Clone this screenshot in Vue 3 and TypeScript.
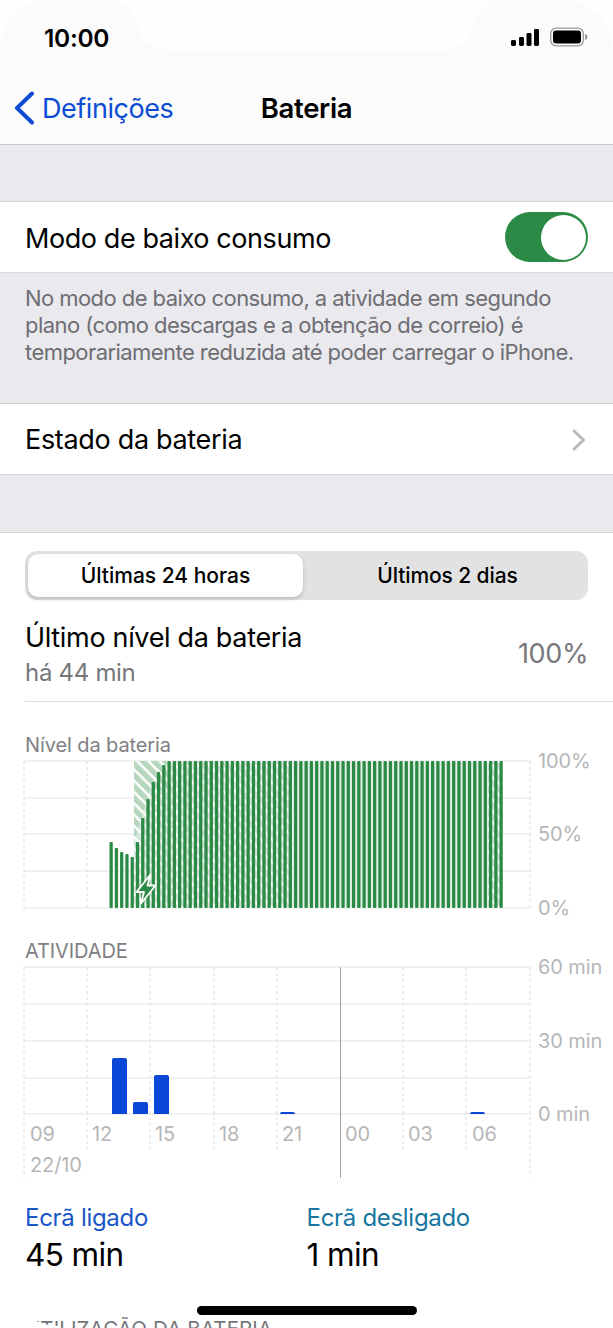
<script setup lang="ts">
const tops = [842, 848, 852, 854, 857, 842, 818, 799, 782, 772, 765]
const pitch = 5.27
const bars = Array.from({ length: 75 }, (_, i) => {
  const top = i < tops.length ? tops[i] : 761
  return { x: 109.5 + i * pitch, top, h: 908 - top }
})
const batteryDashes = [24, 87, 530]
const activityDashes = [87, 150, 214, 277, 403, 466]
const rows = [967, 1004, 1041, 1078, 1114]
const batteryRows = [761, 798, 834, 871, 908]
const hours = [
  ['09', 30], ['12', 92], ['15', 155], ['18', 219], ['21', 282], ['00', 345], ['03', 408], ['06', 472],
] as const
const activity = [
  { x: 112, top: 1058 }, { x: 133, top: 1102 }, { x: 154, top: 1075 }, { x: 280, top: 1112 }, { x: 470, top: 1112 },
]
</script>

<template>
  <div class="screen">
    <header class="top">
      <svg class="notch" width="613" height="52" viewBox="0 0 613 52" aria-hidden="true">
        <path d="M0 52 C2 18 20 0 52 0 L112 0 C126 0 132 14 138 28 C144 44 156 50 172 50 L440 50 C456 50 466 44 472 28 C477 14 484 0 498 0 L560 0 C592 0 611 18 613 52 L613 0 L0 0Z" fill="#fefefe" />
      </svg>
      <div class="status">
        <span class="time">10:00</span>
        <span class="indicators">
          <svg width="30" height="18" viewBox="0 0 30 18" aria-hidden="true">
            <rect x="1" y="12" width="5" height="6" rx="1.4" />
            <rect x="9" y="9" width="5" height="9" rx="1.4" />
            <rect x="16.500" y="5" width="5" height="13" rx="1.4" />
            <rect x="24" y="1" width="5" height="17" rx="1.4" />
          </svg>
          <svg width="38" height="20" viewBox="0 0 38 20" aria-hidden="true">
            <rect x="0.700" y="1.200" width="32.600" height="17.600" rx="5.500" fill="none" stroke="#9a9a9a" stroke-width="1.300" />
            <rect x="3" y="3.500" width="28" height="13" rx="3.200" fill="#000" />
            <path d="M35 7 C36.800 7.600 37.500 8.600 37.500 10 C37.500 11.400 36.800 12.400 35 13Z" fill="#9a9a9a" />
          </svg>
        </span>
      </div>
      <nav class="nav">
        <a class="back">
          <svg width="22" height="36" viewBox="0 0 22 36" aria-hidden="true">
            <path d="M20 3.500 L5 18 L20 32.500" fill="none" stroke="#0d4cd3" stroke-width="4" stroke-linecap="round" stroke-linejoin="round" />
          </svg>
          <span>Definições</span>
        </a>
        <h1>Bateria</h1>
      </nav>
    </header>

    <div class="gap first"></div>

    <section class="row low">
      <span>Modo de baixo consumo</span>
      <span class="toggle"><i></i></span>
    </section>

    <p class="note">No modo de baixo consumo, a atividade em segundo plano (como descargas e a obtenção de correio) é temporariamente reduzida até poder carregar o iPhone.</p>

    <section class="row state">
      <span>Estado da bateria</span>
      <svg width="16" height="24" viewBox="0 0 16 24" aria-hidden="true">
        <path d="M3 3 L12.500 12 L3 21" fill="none" stroke="#b8b8bd" stroke-width="3" stroke-linecap="round" stroke-linejoin="round" />
      </svg>
    </section>

    <div class="gap second"></div>

    <main class="panel">
      <div class="segment">
        <span class="seg active">Últimas 24 horas</span>
        <span class="seg">Últimos 2 dias</span>
      </div>

      <div class="last">
        <div class="last-text">
          <div class="last-title">Último nível da bateria</div>
          <div class="last-sub">há 44 min</div>
        </div>
        <div class="last-value">100%</div>
      </div>

      <div class="chart-title level">Nível da bateria</div>
      <svg class="chart battery" width="613" height="180" viewBox="0 746 613 180" aria-label="Nível da bateria">
        <defs>
          <pattern id="hatch" width="8" height="8" patternUnits="userSpaceOnUse" patternTransform="rotate(-45)">
            <rect width="8" height="8" fill="#ffffff" />
            <rect width="5.500" height="8" fill="#b7d6be" />
          </pattern>
        </defs>
        <line v-for="y in batteryRows" :key="y" x1="24" x2="530" :y1="y" :y2="y" class="grid" />
        <line v-for="x in batteryDashes" :key="x" :x1="x" :x2="x" y1="761" y2="908" class="dash" />
        <path d="M134 761 H167 V790 L150 790 L134 842Z" fill="url(#hatch)" />
        <rect x="134" y="761" width="156" height="147" fill="url(#hatch)" opacity="0.6" />
        <rect x="290" y="761" width="198" height="147" fill="#e6f1e8" />
        <rect x="488" y="761" width="14" height="147" fill="url(#hatch)" opacity="0.7" />
        <rect v-for="(b, i) in bars" :key="i" :x="b.x" :y="b.top" width="3.300" :height="b.h" rx="1" fill="#2b8a45" />
        <path d="M150.500 874.500 L136.500 892 L144 892 L141 903.500 L155.500 885.500 L147.500 885.500Z" fill="#2b8a45" stroke="#ffffff" stroke-width="1.800" stroke-linejoin="round" />
        <text x="538" y="768" class="axis">100%</text>
        <text x="538" y="841" class="axis">50%</text>
        <text x="538" y="915" class="axis">0%</text>
      </svg>

      <div class="chart-title activity">ATIVIDADE</div>
      <svg class="chart act" width="613" height="230" viewBox="0 956 613 230" aria-label="Atividade">
        <line v-for="y in rows" :key="y" x1="24" x2="530" :y1="y" :y2="y" class="grid" />
        <line x1="24" x2="24" y1="967" y2="1178" class="dash" />
        <line v-for="x in activityDashes" :key="x" :x1="x" :x2="x" y1="967" y2="1151" class="dash" />
        <line x1="530" x2="530" y1="967" y2="1178" class="dash" />
        <line x1="340.500" x2="340.500" y1="967" y2="1178" stroke="#a4a4a4" stroke-width="1" />
        <path v-for="a in activity" :key="a.x" :d="`M${a.x} 1114 V${a.top + 2} Q${a.x} ${a.top} ${a.x + 2} ${a.top} H${a.x + 13} Q${a.x + 15} ${a.top} ${a.x + 15} ${a.top + 2} V1114Z`" fill="#0a47d6" />
        <text v-for="h in hours" :key="h[0]" :x="h[1]" y="1141" class="axis">{{ h[0] }}</text>
        <text x="30" y="1172" class="axis">22/10</text>
        <text x="538" y="974" class="axis">60 min</text>
        <text x="538" y="1048" class="axis">30 min</text>
        <text x="538" y="1121" class="axis">0 min</text>
      </svg>

      <div class="stats">
        <div class="stat">
          <div class="stat-label on">Ecrã ligado</div>
          <div class="stat-value">45 min</div>
        </div>
        <div class="stat">
          <div class="stat-label off">Ecrã desligado</div>
          <div class="stat-value">1 min</div>
        </div>
      </div>

      <div class="usage">UTILIZAÇÃO DA BATERIA</div>
    </main>

    <svg class="corners" width="613" height="62" viewBox="0 0 613 62" aria-hidden="true">
      <path d="M0 0 A60 60 0 0 0 60 60 L60 62 L0 62Z M613 0 A60 60 0 0 1 553 60 L553 62 L613 62Z" fill="#fff" />
    </svg>
    <div class="home"></div>
  </div>
</template>

<style>
html, body { margin: 0; background: #fff; }
</style>

<style scoped>
.screen {
  position: relative;
  width: 613px;
  height: 1328px;
  overflow: hidden;
  background: #fff;
  color: #000;
  font-family: Inter, "Liberation Sans", sans-serif;
}
.top {
  position: relative;
  height: 145px;
  box-sizing: border-box;
  background: #fbfbfc;
  border-bottom: 1px solid #c9c9cc;
}
.notch { position: absolute; left: 0; top: 0; }
.status {
  position: relative;
  display: flex;
  justify-content: space-between;
  align-items: center;
  height: 50px;
  padding: 25px 25px 0 44px;
  box-sizing: border-box;
}
.time { font-size: 24.500px; font-weight: 600; letter-spacing: -0.3px; }
.indicators { display: flex; align-items: center; gap: 10px; margin-top: -2px; }
.nav {
  display: grid;
  grid-template-columns: 1fr auto 1fr;
  align-items: center;
  height: 36px;
  margin-top: 40px;
}
.back {
  display: flex;
  align-items: center;
  gap: 8px;
  margin-left: 12px;
  color: #0d4cd3;
  font-size: 27px;
  letter-spacing: -0.45px;
}
.nav h1 { margin: 0; font-size: 27.500px; font-weight: 600; letter-spacing: -0.35px; }
.gap { background: #e9e9ee; }
.gap.first { height: 56px; }
.gap.second { height: 57px; }
.row {
  display: flex;
  align-items: center;
  justify-content: space-between;
  box-sizing: border-box;
  height: 72px;
  padding: 0 25px;
  background: #fff;
  border-top: 1px solid #d4d4d7;
  border-bottom: 1px solid #d9d9dc;
  font-size: 27px;
  letter-spacing: -0.42px;
}
.row.low { padding-top: 2px; }
.row.state { padding: 1px 26px 0 25px; letter-spacing: -0.32px; }
.toggle {
  display: flex;
  justify-content: flex-end;
  align-items: center;
  box-sizing: border-box;
  width: 83px;
  height: 50px;
  margin-top: -2px;
  padding: 2.500px;
  border-radius: 25px;
  background: #2b8a45;
}
.toggle i {
  display: block;
  width: 45px;
  height: 45px;
  border-radius: 50%;
  background: #fff;
}
.note {
  margin: 0;
  height: 130px;
  box-sizing: border-box;
  padding: 12px 25px 0;
  background: #e9e9ee;
  color: #6e6e73;
  font-size: 22px;
  line-height: 27px;
  letter-spacing: -0.56px;
}
.panel {
  background: #fff;
  border-top: 1px solid #d4d4d7;
}
.segment {
  display: flex;
  height: 49px;
  margin: 18px 25px 0;
  padding: 3px;
  box-sizing: border-box;
  background: #e2e2e3;
  border-radius: 12px;
}
.seg {
  flex: 1;
  display: flex;
  align-items: center;
  justify-content: center;
  padding-left: 7px;
  font-size: 21px;
  font-weight: 500;
  letter-spacing: -0.1px;
}
.seg.active {
  flex: 0 0 275px;
  padding-left: 0;
  background: #fff;
  border-radius: 10px;
  box-shadow: 0 2px 4px rgba(0, 0, 0, 0.18);
  letter-spacing: 0;
}
.last {
  display: flex;
  justify-content: space-between;
  align-items: center;
  height: 102px;
  margin-left: 25px;
  padding-right: 25px;
  border-bottom: 1px solid #dcdcde;
  box-sizing: border-box;
}
.last-text { padding-top: 11px; }
.last-title { font-size: 27px; letter-spacing: -0.33px; line-height: 34px; }
.last-sub { font-size: 24px; color: #77777b; letter-spacing: -0.3px; line-height: 36px; }
.last-value { font-size: 27px; color: #77777b; letter-spacing: -0.4px; padding-top: 6px; }
.chart-title {
  padding-left: 25px;
  color: #808084;
  font-size: 20px;
  line-height: 24px;
  letter-spacing: -0.1px;
}
.chart-title.level { margin-top: 31px; }
.chart-title.activity { margin-top: 13px; }
.chart { display: block; }
.chart.battery { margin-top: -11px; }
.chart.act { margin-top: -7px; }
.grid { stroke: #e3e3e5; stroke-width: 1.200; }
.dash { stroke: #dcdcde; stroke-width: 1; stroke-dasharray: 3 3; }
.axis { fill: #b6b6b8; font-size: 20px; font-family: Inter, "Liberation Sans", sans-serif; letter-spacing: -0.1px; }
.stats {
  display: flex;
  padding: 17px 25px 0;
}
.stat { width: 282px; }
.stat-label { font-size: 24px; line-height: 30px; letter-spacing: -0.3px; }
.stat-label.on { color: #1a55c8; }
.stat-label.off { color: #17769f; }
.stat-value { margin-top: 4px; font-size: 31.500px; line-height: 36px; letter-spacing: -0.6px; }
.usage {
  margin-top: 44px;
  padding-left: 25px;
  color: #77777b;
  font-size: 20.500px;
  line-height: 24px;
  letter-spacing: 0.1px;
}
.corners { position: absolute; left: 0; bottom: 0; }
.home {
  position: absolute;
  left: 197px;
  top: 1306px;
  width: 220px;
  height: 9px;
  border-radius: 5px;
  background: #000;
}
</style>
